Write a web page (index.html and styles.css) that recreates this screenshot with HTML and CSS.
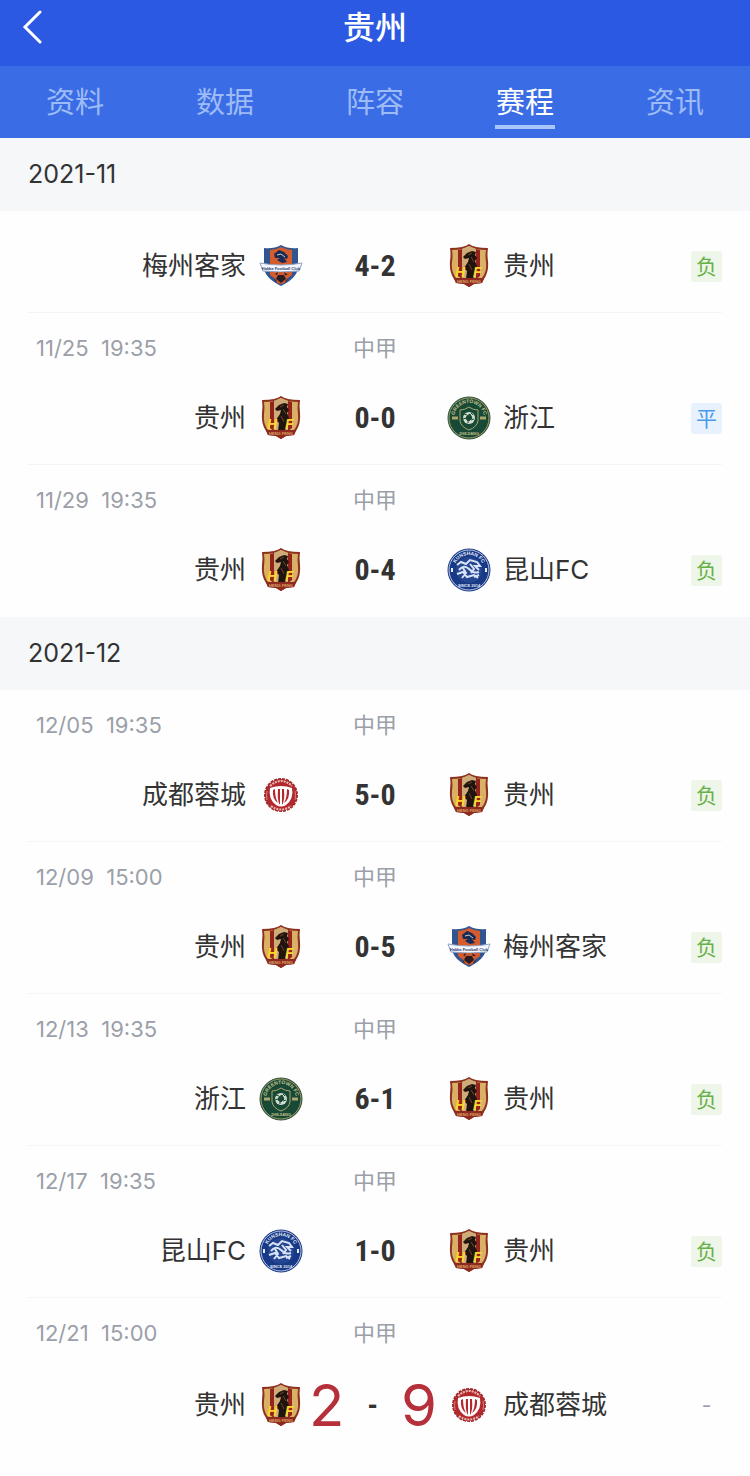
FILE: index.html
```html
<!DOCTYPE html>
<html lang="zh-CN">
<head>
  <meta charset="utf-8">
  <meta name="viewport" content="width=device-width, initial-scale=1">
  <title>贵州 - 赛程</title>
  <link rel="stylesheet" href="styles.css">
</head>
<body>

  <!-- team badges -->
  <svg class="sprite" aria-hidden="true">
    <symbol id="guizhou" viewBox="0 0 44 44">
      <path d="M22 0 Q27 4 41 4 Q40 10 41 17 Q42 28 37 35 L35 39 L27 40 L22 43 L17 40 L9 39 L7 35 Q2 28 3 17 Q4 10 3 4 Q17 4 22 0Z" fill="#8e3220"/>
      <path d="M22 2 Q28 6 39 6 Q38 12 39 18 Q40 28 35 34 L22 41 L9 34 Q4 28 5 18 Q6 12 5 6 Q16 6 22 2Z" fill="#d9b066"/>
      <path d="M11 6 L15 5 V35 L11 32Z M29 5 L33 6 V32 L29 35Z" fill="#93251c"/>
      <path d="M15 5 L22 2 L29 5 V34 H15Z" fill="#cfab78"/>
      <path d="M16 13 L20 9 L25 7 L29 8 L28 11 L30 14 L28 17 L30 22 L28 27 L26 35 H19 L20 27 L17 24 L21 18 L22 14 L18 15Z" fill="#21130e"/>
      <path d="M21 11 L25 9 M24 13 L27 18 M22 20 L25 26" stroke="#68452a" fill="none"/>
      <path d="M7 34 H37 L35 39 L27 40 L22 43 L17 40 L9 39Z" fill="#8d2b1f"/>
      <text x="8" y="33" class="hf">H</text>
      <text x="26" y="33" class="hf">F</text>
      <text x="22" y="39" class="tiny" fill="#dfa266">HENG FENG</text>
    </symbol>

    <symbol id="meizhou" viewBox="0 0 44 44">
      <path d="M22 1 Q29 5 39 4 V24 Q38 34 22 42 Q6 34 5 24 V4 Q15 5 22 1Z" fill="#31558f"/>
      <path d="M22 3 Q28 6 33 6 V31 L22 39 L11 31 V6 Q17 6 22 3Z" fill="#d65b2d"/>
      <path d="M15 10 L20 6 L25 8 L29 12 L28 15 L25 14 L28 18 L23 19 L18 16 L21 14 L16 14Z" fill="#172b57"/>
      <path d="M18 11 L22 10 L26 13" stroke="#d9c6bd" fill="none"/>
      <path d="M1 19 Q22 23 43 19 L40 27 Q22 29 4 27Z" fill="#f5f7fc" stroke="#8ea1c4"/>
      <text x="22" y="26" class="tiny" fill="#243b73">Hakka Football Club</text>
      <circle cx="22" cy="34" r="6" fill="#cf5930"/>
      <path d="M19 31 H25 L27 35 L22 39 L17 35Z M16 30 L19 28 L18 31Z M25 28 L29 31 L26 31Z M15 35 L17 36 L18 39Z M29 35 L27 36 L26 39Z" fill="#2b1c24"/>
    </symbol>

    <symbol id="zhejiang" viewBox="0 0 44 44">
      <circle cx="22" cy="22" r="21" fill="#174936" stroke="#2f5037"/>
      <circle cx="22" cy="22" r="20" fill="none" stroke="#9a9a65"/>
      <path id="zj-top" d="M7 22 A15 15 0 0 1 37 22" fill="none"/>
      <text class="ring" fill="#c4c08c"><textPath href="#zj-top" startOffset="50%">GREENTOWN FC</textPath></text>
      <path d="M13 14 Q18 14 22 11 Q26 14 31 14 V25 Q30 31 22 34 Q14 31 13 25Z" fill="#174936" stroke="#aaa66d"/>
      <circle cx="22" cy="22" r="6" fill="#d3ded0"/>
      <path d="M20 20 L23 18 L25 22 L22 25 L19 23Z M17 18 L20 19 M24 17 L26 19 M27 23 L24 24 M21 27 V24 M16 23 L19 22" fill="#174936" stroke="#174936"/>
      <path d="M5 22 H11 M33 22 H39" stroke="#aaa66d" stroke-width="3"/>
      <text x="22" y="39" class="tiny" fill="#c0bb88">ZHEJIANG</text>
    </symbol>

    <symbol id="kunshan" viewBox="0 0 44 44">
      <circle cx="22" cy="22" r="21" fill="#173986" stroke="#173986"/>
      <circle cx="22" cy="22" r="20" fill="none" stroke="#b4c1e2"/>
      <circle cx="22" cy="22" r="13" fill="#24458f"/>
      <path id="ks-top" d="M7 22 A15 15 0 0 1 37 22" fill="none"/>
      <text class="ring" fill="#e4ebfa"><textPath href="#ks-top" startOffset="50%">KUNSHAN FC</textPath></text>
      <path d="M10 17 L14 14 L19 16 L23 12 L30 14 L33 18 L28 18 L32 22 M12 22 Q17 16 22 21 Q27 26 32 24 M10 26 L16 24 L20 29 L27 27 L31 30 M16 20 L19 25 L15 30 M23 16 L27 21 L24 25 M27 29 L32 27" fill="none" stroke="#d9e3f7" stroke-width="2"/>
      <text x="22" y="39" class="tiny" fill="#e4ebfa">SINCE 2014</text>
      <path d="M5 20 V24 M39 20 V24" stroke="#e4ebfa" stroke-width="2"/>
    </symbol>

    <symbol id="chengdu" viewBox="0 0 44 44">
      <circle cx="22" cy="22" r="16" fill="#b3282c" stroke="#a12a2c" stroke-width="2" stroke-dasharray="3 1"/>
      <path d="M11 13 Q22 3 33 13 M12 33 Q22 40 32 33" fill="none" stroke="#eab9b7" stroke-width="2" stroke-dasharray="2 1"/>
      <path d="M8 18 Q7 22 8 27 M36 18 Q37 22 36 27" fill="none" stroke="#d98683"/>
      <path d="M11 15 Q22 11 33 15 Q35 26 27 32 Q22 35 17 32 Q9 26 11 15Z" fill="#fff"/>
      <path d="M14 17 L16 16 Q16 25 19 30 Q13 26 14 17Z M19 16 H21 V32 Q18 28 19 16Z M23 16 H25 Q26 28 23 32Z M28 16 L30 17 Q31 26 25 30 Q28 25 28 16Z" fill="#b3282c"/>
    </symbol>
  </svg>

  <header class="header">
    <button class="back" aria-label="返回">
      <svg width="20" height="34" viewBox="0 0 20 34"><path d="M18 2 L3 17 L18 32" fill="none" stroke="#fff" stroke-width="3" stroke-linecap="round"/></svg>
    </button>
    <h1>贵州</h1>
  </header>

  <nav class="tabs">
    <a href="#info">资料</a>
    <a href="#data">数据</a>
    <a href="#squad">阵容</a>
    <a href="#schedule" class="active">赛程</a>
    <a href="#news">资讯</a>
  </nav>

  <main>
    <h2 class="month">2021-11</h2>
    <ul class="matches">
      <li class="no-meta">
        <div class="match">
          <span class="home">梅州客家</span>
          <svg class="logo"><use href="#meizhou"/></svg>
          <span class="score">4-2</span>
          <svg class="logo"><use href="#guizhou"/></svg>
          <span class="away">贵州</span>
          <span class="result">负</span>
        </div>
      </li>
      <li>
        <div class="meta"><time>11/25&nbsp; 19:35</time><span>中甲</span></div>
        <div class="match">
          <span class="home">贵州</span>
          <svg class="logo"><use href="#guizhou"/></svg>
          <span class="score">0-0</span>
          <svg class="logo"><use href="#zhejiang"/></svg>
          <span class="away">浙江</span>
          <span class="result draw">平</span>
        </div>
      </li>
      <li>
        <div class="meta"><time>11/29&nbsp; 19:35</time><span>中甲</span></div>
        <div class="match">
          <span class="home">贵州</span>
          <svg class="logo"><use href="#guizhou"/></svg>
          <span class="score">0-4</span>
          <svg class="logo"><use href="#kunshan"/></svg>
          <span class="away">昆山FC</span>
          <span class="result">负</span>
        </div>
      </li>
    </ul>

    <h2 class="month">2021-12</h2>
    <ul class="matches">
      <li>
        <div class="meta"><time>12/05&nbsp; 19:35</time><span>中甲</span></div>
        <div class="match">
          <span class="home">成都蓉城</span>
          <svg class="logo"><use href="#chengdu"/></svg>
          <span class="score">5-0</span>
          <svg class="logo"><use href="#guizhou"/></svg>
          <span class="away">贵州</span>
          <span class="result">负</span>
        </div>
      </li>
      <li>
        <div class="meta"><time>12/09&nbsp; 15:00</time><span>中甲</span></div>
        <div class="match">
          <span class="home">贵州</span>
          <svg class="logo"><use href="#guizhou"/></svg>
          <span class="score">0-5</span>
          <svg class="logo"><use href="#meizhou"/></svg>
          <span class="away">梅州客家</span>
          <span class="result">负</span>
        </div>
      </li>
      <li>
        <div class="meta"><time>12/13&nbsp; 19:35</time><span>中甲</span></div>
        <div class="match">
          <span class="home">浙江</span>
          <svg class="logo"><use href="#zhejiang"/></svg>
          <span class="score">6-1</span>
          <svg class="logo"><use href="#guizhou"/></svg>
          <span class="away">贵州</span>
          <span class="result">负</span>
        </div>
      </li>
      <li>
        <div class="meta"><time>12/17&nbsp; 19:35</time><span>中甲</span></div>
        <div class="match">
          <span class="home">昆山FC</span>
          <svg class="logo"><use href="#kunshan"/></svg>
          <span class="score">1-0</span>
          <svg class="logo"><use href="#guizhou"/></svg>
          <span class="away">贵州</span>
          <span class="result">负</span>
        </div>
      </li>
      <li>
        <div class="meta"><time>12/21&nbsp; 15:00</time><span>中甲</span></div>
        <div class="match">
          <span class="home">贵州</span>
          <svg class="logo"><use href="#guizhou"/></svg>
          <span class="score big"><b>2</b><i>-</i><b>9</b></span>
          <svg class="logo"><use href="#chengdu"/></svg>
          <span class="away">成都蓉城</span>
          <span class="result none">-</span>
        </div>
      </li>
    </ul>
  </main>

</body>
</html>
```
FILE: styles.css
```css
* {
  box-sizing: border-box;
}
body {
  margin: 0;
  background: #fefefe;
  color: #333;
  font-family: Inter, "Noto Sans CJK SC", sans-serif;
}
.sprite {
  display: none;
}
.hf {
  font: italic bold 14px "Liberation Sans", sans-serif;
  fill: #fbd62c;
}
.tiny {
  font: bold 4px "Liberation Sans", sans-serif;
  text-anchor: middle;
}
.ring {
  font: bold 5px "Liberation Sans", sans-serif;
  text-anchor: middle;
}

/* header */
.header {
  display: grid;
  grid-template-columns: 1fr auto 1fr;
  align-items: center;
  height: 66px;
  padding: 0 22px 12px;
  background: #2b59e1;
  color: #fff;
}
.header h1 {
  margin: 0;
  padding-top: 2px;
  font-size: 32px;
  line-height: 48px;
  font-weight: 500;
}
.back {
  justify-self: start;
  display: flex;
  padding: 0;
  border: none;
  background: none;
  cursor: pointer;
}
.tabs {
  display: grid;
  grid-template-columns: repeat(5, 1fr);
  justify-items: center;
  height: 72px;
  background: #3a6de5;
}
.tabs a {
  width: 60px;
  height: 63px;
  padding-top: 17px;
  color: #9dbbf6;
  font-size: 29px;
  line-height: 40px;
  text-align: center;
  text-decoration: none;
}
.tabs .active {
  color: #fff;
  border-bottom: 4px solid #a9c6fb;
}

/* match list */
.month {
  margin: 0;
  padding: 0 28px;
  background: #f6f7f9;
  font-size: 25px;
  line-height: 73px;
  font-weight: 400;
}
.matches {
  margin: 0;
  padding: 0 28px;
  list-style: none;
}
.matches li {
  padding: 21px 0 24px;
  border-bottom: 1px solid #f5f5f6;
}
.matches li:last-child {
  border-color: transparent;
}
.matches .no-meta {
  padding-top: 33px;
}
.meta {
  display: grid;
  grid-template-columns: 1fr auto 1fr;
  margin-bottom: 34px;
  padding: 0 8px;
  color: #9b9fa9;
  font-size: 22px;
  line-height: 28px;
}
.match {
  display: grid;
  grid-template-columns: 1fr 44px 144px 44px 1fr;
  align-items: center;
  height: 44px;
  font-size: 26px;
  line-height: 40px;
}
.logo {
  width: 44px;
  height: 44px;
}
.home {
  padding-right: 13px;
  text-align: right;
}
.away {
  grid-area: 1 / 5;
  padding-left: 12px;
}
.score {
  font-family: "Roboto Condensed", "Liberation Sans Narrow", Roboto, sans-serif;
  font-size: 30px;
  font-weight: bold;
  text-align: center;
}
.big {
  display: flex;
  justify-content: space-between;
  align-items: center;
  padding: 0 10px 0 6px;
  line-height: 44px;
}
.big b {
  color: #b6303b;
  font: 400 58px/48px Inter, sans-serif;
}
.big i {
  font-style: normal;
}
.result {
  grid-area: 1 / 5;
  justify-self: end;
  width: 31px;
  border-radius: 3px;
  background: #edf6e9;
  color: #67b045;
  font-size: 21px;
  line-height: 31px;
  text-align: center;
}
.draw {
  background: #e8f2fe;
  color: #4c98e8;
}
.none {
  background: none;
  color: #9b9fa9;
}
```
